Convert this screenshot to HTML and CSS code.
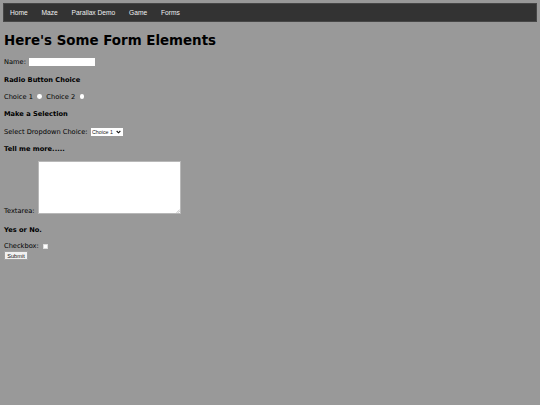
FILE: index.html
```html
<!DOCTYPE html>
<html lang="en">
<head>
<meta charset="utf-8">
<title>Forms</title>
<link rel="stylesheet" href="styles.css">
</head>
<body>
<nav class="topnav">
  <a class="nav-link" href="#">Home</a>
  <a class="nav-link" href="#">Maze</a>
  <a class="nav-link" href="#">Parallax Demo</a>
  <a class="nav-link" href="#">Game</a>
  <a class="nav-link" href="#">Forms</a>
</nav>
<main class="page">
  <h1 class="title">Here's Some Form Elements</h1>
  <form class="form">
    <div class="row row-name">
      <span class="label">Name:</span>
      <input class="text-input" type="text">
    </div>
    <h4 class="section s-radio">Radio Button Choice</h4>
    <div class="row row-choice">
      <span class="label">Choice 1</span>
      <input class="radio" type="radio" name="choice">
      <span class="label">Choice 2</span>
      <input class="radio" type="radio" name="choice">
    </div>
    <h4 class="section s-select">Make a Selection</h4>
    <div class="row row-select">
      <span class="label">Select Dropdown Choice:</span>
      <span class="select-wrap">
        <select class="select">
          <option>Choice 1</option>
          <option>Choice 2</option>
        </select>
        <svg class="select-arrow" viewBox="0 0 6 4" width="5" height="4"><path d="M0.8 0.8 L3 3 L5.2 0.8" fill="none" stroke="#111" stroke-width="1.3"/></svg>
      </span>
    </div>
    <h4 class="section s-more">Tell me more.....</h4>
    <div class="row row-textarea">
      <span class="label label-low">Textarea:</span>
      <span class="textarea-wrap">
        <textarea class="textarea"></textarea>
        <svg class="grip" viewBox="0 0 4 4" width="4" height="4"><path d="M0.5 3.8 L3.8 0.5 M2 3.8 L3.8 2" stroke="#a0a0a0" stroke-width="0.6" fill="none"/></svg>
      </span>
    </div>
    <h4 class="section s-yes">Yes or No.</h4>
    <div class="row row-check">
      <span class="label">Checkbox:</span>
      <input class="checkbox" type="checkbox">
    </div>
    <button class="submit" type="button">Submit</button>
  </form>
</main>
</body>
</html>
```

FILE: styles.css
```css
html, body {
  margin: 0;
  padding: 0;
}

body {
  background: #999999;
  color: #000000;
  font-family: "DejaVu Sans", Verdana, sans-serif;
  font-size: 6.67px;
  width: 540px;
  height: 405px;
  overflow: hidden;
}

.topnav {
  margin: 3px 3px 0 3px;
  height: 19px;
  box-sizing: border-box;
  background: #333333;
  border: 1px solid #474747;
  display: flex;
  align-items: center;
}

.nav-link {
  font-family: "Liberation Sans", Arial, sans-serif;
  font-size: 6.67px;
  color: #f0f0f0;
  text-decoration: none;
  padding: 0 6.9px;
  line-height: 8px;
}

.nav-link:first-child {
  padding-left: 6px;
}

.page {
  padding: 0 4px;
}

.title {
  margin: 9.2px 0 0 0;
  font-size: 13.4px;
  line-height: 19px;
  font-weight: bold;
  color: #000000;
}

.form {
  margin: 0;
}

.row {
  display: flex;
  align-items: center;
  height: 8px;
}

.label {
  line-height: 8px;
  white-space: nowrap;
}

.section {
  margin: 0;
  font-size: 6.67px;
  line-height: 8px;
  height: 8px;
  font-weight: bold;
  color: #000000;
}

.row-name {
  margin-top: 7px;
  height: 10px;
}

.text-input {
  margin: 0 0 0 3.5px;
  width: 66px;
  height: 8px;
  box-sizing: border-box;
  border: none;
  background: #ffffff;
  padding: 0;
  font-size: 6px;
}

.s-radio { margin-top: 8.8px; }
.row-choice { margin-top: 8.7px; }

.radio {
  appearance: none;
  -webkit-appearance: none;
  margin: 0 4.3px 0 4.3px;
  width: 4.8px;
  height: 4.8px;
  border-radius: 50%;
  background: #ffffff;
  border: none;
  box-sizing: border-box;
}

.s-select { margin-top: 9.7px; }
.row-select { margin-top: 9.3px; }

.select-wrap {
  position: relative;
  display: inline-block;
  margin-left: 3px;
  height: 8px;
}

.select {
  appearance: none;
  -webkit-appearance: none;
  display: block;
  width: 32px;
  height: 8px;
  box-sizing: border-box;
  border: none;
  border-radius: 0;
  background: #ffffff;
  color: #222222;
  font-family: "Liberation Sans", Arial, sans-serif;
  font-size: 5.3px;
  line-height: 8px;
  padding: 0 0 0 1.5px;
  margin: 0;
}

.select-arrow {
  position: absolute;
  right: 1.5px;
  top: 2px;
  pointer-events: none;
}

.s-more { margin-top: 9.3px; }

.row-textarea {
  margin-top: 8.2px;
  height: 53px;
  align-items: flex-end;
}

.label-low {
  line-height: 5px;
}

.textarea-wrap {
  position: relative;
  display: block;
  margin-left: 3px;
  width: 143px;
  height: 53px;
}

.textarea {
  display: block;
  margin: 0;
  width: 143px;
  height: 53px;
  box-sizing: border-box;
  border: 1px solid #b8b8b8;
  background: #ffffff;
  padding: 0;
  font-size: 6px;
  resize: none;
}

.grip {
  position: absolute;
  right: 1px;
  bottom: 1px;
  pointer-events: none;
}

.s-yes { margin-top: 11.5px; }
.row-check { margin-top: 8.5px; }

.checkbox {
  appearance: none;
  -webkit-appearance: none;
  margin: 0 0 0 4px;
  width: 5px;
  height: 5px;
  box-sizing: border-box;
  background: #ffffff;
  border: 0.5px solid #dddddd;
  border-radius: 0.5px;
}

.submit {
  display: block;
  margin: 0.7px 0 0 0;
  width: 24px;
  height: 9px;
  box-sizing: border-box;
  padding: 0;
  background: #f0f0f0;
  border: 0.5px solid #a0a0a0;
  border-radius: 1px;
  color: #111111;
  font-family: "Liberation Sans", Arial, sans-serif;
  font-size: 5.6px;
  line-height: 8px;
}
```
